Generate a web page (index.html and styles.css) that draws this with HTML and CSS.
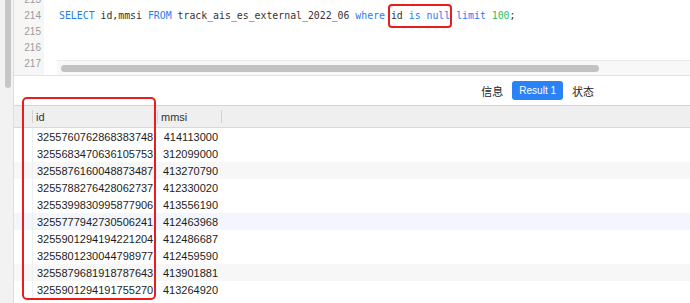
FILE: index.html
```html
<!DOCTYPE html>
<html lang="zh">
<head>
    <meta charset="UTF-8">
    <meta name="viewport" content="width=device-width, initial-scale=1.0">
    <title>Query Result</title>
    <link rel="stylesheet" href="styles.css">
</head>
<body>
    <div class="app">
        <div class="vscroll"><div class="vthumb"></div></div>

        <div class="main">
            <!-- SQL editor -->
            <div class="editor">
                <div class="gutter">
                    <div class="ln">213</div>
                    <div class="ln">214</div>
                    <div class="ln">215</div>
                    <div class="ln">216</div>
                    <div class="ln">217</div>
                </div>
                <div class="code">
                    <div class="lines">
                        <div class="line"></div>
                        <div class="line"><span class="kw">SELECT</span> id,mmsi <span class="kw">FROM</span> track_ais_es_external_2022_06 <span class="kw">where</span> id <span class="kw">is</span> <span class="kw">null</span> <span class="kw">limit</span> <span class="num">100</span>;</div>
                        <div class="line"></div>
                        <div class="line"></div>
                    </div>
                    <div class="hscroll"><div class="hthumb"></div></div>
                </div>
            </div>

            <!-- result tabs -->
            <div class="tabs">
                <span class="tab">信息</span>
                <span class="tab active">Result 1</span>
                <span class="tab">状态</span>
            </div>

            <!-- result grid -->
            <table class="grid">
                <colgroup>
                    <col class="c-row">
                    <col class="c-id">
                    <col class="c-mmsi">
                    <col>
                </colgroup>
                <thead>
                    <tr>
                        <th class="sep"></th>
                        <th class="sep">id</th>
                        <th class="sep">mmsi</th>
                        <th></th>
                    </tr>
                </thead>
                <tbody id="rows"></tbody>
            </table>
        </div>

        <!-- annotation boxes -->
        <div class="mark mark-sql"></div>
        <div class="mark mark-col"></div>
    </div>

    <script>
        // Result rows
        const rows = [
            ['3255760762868383748', '414113000'],
            ['3255683470636105753', '312099000'],
            ['3255876160048873487', '413270790'],
            ['3255788276428062737', '412330020'],
            ['3255399830995877906', '413556190'],
            ['3255777942730506241', '412463968'],
            ['3255901294194221204', '412486687'],
            ['3255801230044798977', '412459590'],
            ['3255879681918787643', '413901881'],
            ['3255901294191755270', '413264920']
        ];

        const tbody = document.getElementById('rows');
        rows.forEach((row, index) => {
            const tr = document.createElement('tr');
            if (index === 2 || index === 8) tr.className = 'stripe';
            if (index === 5) tr.className = 'hover';
            tr.innerHTML = `
                <td class="rn"></td>
                <td>${row[0]}</td>
                <td class="right">${row[1]}</td>
                <td></td>
            `;
            tbody.appendChild(tr);
        });
    </script>
</body>
</html>
```

FILE: styles.css
```css
body {
    margin: 0;
    padding: 0;
    background-color: white;
    font-family: "Liberation Sans", Arial, "Noto Sans CJK SC", sans-serif;
    color: #1d1d1d;
}

.app {
    position: relative;
    display: flex;
    width: 690px;
    height: 303px;
    overflow: hidden;
}

.vscroll {
    width: 14px;
    flex-shrink: 0;
    padding-left: 5px;
    box-sizing: border-box;
    background-color: #f2f2f2;
    border-right: 1px solid #dedede;
}

.vthumb {
    width: 6px;
    height: 88px;
    background-color: #c6c6c6;
    border-radius: 0 0 3px 3px;
}

.main {
    flex: 1;
    min-width: 0;
}

/* editor */
.editor {
    display: flex;
    height: 75px;
    border-bottom: 1px solid #e3e3e3;
    overflow: hidden;
}

.gutter {
    width: 30px;
    flex-shrink: 0;
    background-color: #f6f6f6;
    margin-top: -8px;
}

.ln {
    height: 16px;
    line-height: 16px;
    padding-right: 3px;
    text-align: right;
    font-size: 10px;
    color: #9b9b9b;
}

.code {
    flex: 1;
    display: flex;
    flex-direction: column;
}

.lines {
    flex: 1;
    overflow: hidden;
    margin-top: -8px;
    padding-left: 15px;
}

.line {
    height: 16px;
    line-height: 16px;
    font-family: "DejaVu Sans Mono", "Liberation Mono", monospace;
    font-size: 9.85px;
    color: #333;
    white-space: pre;
}

.kw {
    color: #1f7cf0;
}

.num {
    color: #1fbf62;
}

.hscroll {
    height: 14px;
    margin-left: 13px;
    background-color: #f8f8f8;
    border-top: 1px solid #ececec;
}

.hthumb {
    width: 538px;
    height: 7px;
    margin: 4px 0 0 4px;
    background-color: #c2c2c2;
    border-radius: 4px;
}

/* tabs */
.tabs {
    display: flex;
    justify-content: flex-end;
    align-items: center;
    gap: 9px;
    height: 29px;
    padding-right: 96px;
}

.tab {
    font-size: 11px;
    color: #222;
}

.tab.active {
    height: 19px;
    line-height: 19px;
    padding: 0 7px;
    font-size: 10px;
    color: white;
    background-color: #2a82f6;
    border-radius: 3px;
}

/* grid */
.grid {
    width: 100%;
    table-layout: fixed;
    border-collapse: collapse;
    font-size: 11px;
}

.c-row {
    width: 19px;
}

.c-id {
    width: 125px;
}

.c-mmsi {
    width: 64px;
}

.grid th {
    position: relative;
    height: 21px;
    padding: 0 3px;
    text-align: left;
    font-weight: normal;
    color: #333;
    background-color: #efefef;
    border-top: 1px solid #d4d4d4;
    border-bottom: 1px solid #d9d9d9;
}

.grid th.sep::after {
    content: "";
    position: absolute;
    right: 0;
    top: 4px;
    bottom: 4px;
    width: 1px;
    background-color: #d2d2d2;
}

.grid td {
    height: 17px;
    padding: 0 4px;
    white-space: nowrap;
}

.grid td.rn {
    box-shadow: inset -1px 0 0 #efefef;
}

.grid td.right {
    text-align: right;
}

.grid tr.stripe td {
    background-color: #f7f7f7;
}

.grid tr.hover td {
    background-color: #f3f7fd;
}

/* red annotation boxes */
.mark {
    position: absolute;
    box-sizing: border-box;
    border: 2px solid #ec1c1c;
    border-radius: 4px;
}

.mark-sql {
    left: 388px;
    top: 4px;
    width: 64px;
    height: 24px;
}

.mark-col {
    left: 22px;
    top: 97px;
    width: 134px;
    height: 203px;
    border-radius: 5px;
}
```
